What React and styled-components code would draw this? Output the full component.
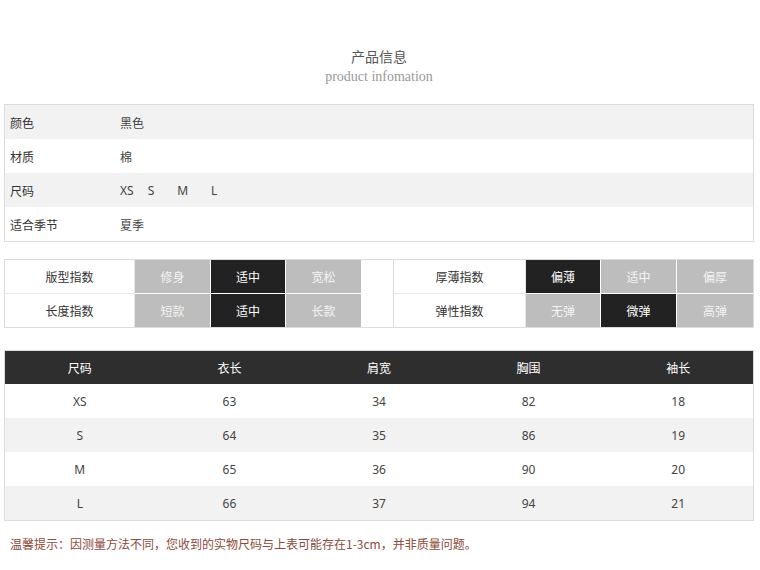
import React from "react";
import styled, { createGlobalStyle } from "styled-components";

const Global = createGlobalStyle`
  html, body { margin: 0; padding: 0; background: #fff; }
  body { font-family: "Noto Sans", "Noto Sans CJK SC", sans-serif; font-size: 12px; color: #333; }
  * { box-sizing: border-box; }
`;

const Page = styled.div`
  width: 760px;
  padding: 46px 6px 0 4px;
`;

const Heading = styled.div`
  text-align: center;
  margin-bottom: 17px;
`;

const Title = styled.div`
  font-family: "Noto Sans CJK SC", sans-serif;
  font-size: 14px;
  line-height: 20px;
  color: #555;
`;

const Subtitle = styled.div`
  margin-top: 1px;
  font-family: "Liberation Serif", serif;
  font-size: 14px;
  line-height: 20px;
  color: #999;
`;

const InfoTable = styled.div`
  border: 1px solid #dcdcdc;
  margin-bottom: 17px;
`;

const InfoRow = styled.div`
  display: flex;
  align-items: center;
  height: 34px;
  background: ${(p) => (p.$alt ? "#f2f2f2" : "#fff")};
`;

const InfoLabel = styled.div`
  width: 115px;
  padding-left: 5px;
  font-family: "Noto Sans CJK SC", sans-serif;
  color: #333;
`;

const InfoValue = styled.div`
  display: flex;
  font-family: "Noto Sans CJK SC", sans-serif;
  color: #444;
`;

const SizeItem = styled.span`
  margin-right: ${(p) => p.$gap}px;
  font-family: "Noto Sans", sans-serif;
`;

const IndexWrap = styled.div`
  display: flex;
  border: 1px solid #dcdcdc;
  margin-bottom: 22px;
`;

const IndexGrid = styled.div`
  display: grid;
  grid-template-columns: ${(p) => p.$cols};
  ${(p) => (p.$right ? "border-left: 1px solid #dcdcdc; margin-left: 32px;" : "")}
`;

const IndexLabel = styled.div`
  height: ${(p) => (p.$first ? 34 : 33)}px;
  display: flex;
  align-items: center;
  justify-content: center;
  font-family: "Noto Sans CJK SC", sans-serif;
  color: #333;
  border-right: 1px solid #e6e6e6;
  ${(p) => (p.$first ? "border-bottom: 1px solid #e6e6e6;" : "")}
`;

const IndexOption = styled.div`
  height: ${(p) => (p.$first ? 34 : 33)}px;
  display: flex;
  align-items: center;
  justify-content: center;
  font-family: "Noto Sans CJK SC", sans-serif;
  background: ${(p) => (p.$on ? "#222" : "#bdbdbd")};
  color: ${(p) => (p.$on ? "#fff" : "#f4f4f4")};
  border-right: ${(p) => (p.$last ? "0" : "1px solid #fff")};
  ${(p) => (p.$first ? "border-bottom: 1px solid #fff;" : "")}
`;

const SizeTable = styled.div`
  border: 1px solid #dcdcdc;
`;

const SizeRow = styled.div`
  display: grid;
  grid-template-columns: repeat(5, 1fr);
  height: ${(p) => (p.$head ? 33 : 34)}px;
  align-items: center;
  background: ${(p) => (p.$head ? "#2e2e2e" : p.$alt ? "#f2f2f2" : "#fff")};
  color: ${(p) => (p.$head ? "#fff" : "#444")};
`;

const SizeCell = styled.div`
  text-align: center;
  font-family: "Noto Sans", "Noto Sans CJK SC", sans-serif;
`;

const Note = styled.div`
  margin-top: 13px;
  padding-left: 6px;
  line-height: 20px;
  font-family: "Noto Sans CJK SC", sans-serif;
  color: #8c4a3a;
`;

const info = [
  ["颜色", "黑色"],
  ["材质", "棉"],
  ["尺码", null],
  ["适合季节", "夏季"],
];

const leftIdx = [
  ["版型指数", ["修身", "适中", "宽松"], 1],
  ["长度指数", ["短款", "适中", "长款"], 1],
];
const rightIdx = [
  ["厚薄指数", ["偏薄", "适中", "偏厚"], 0],
  ["弹性指数", ["无弹", "微弹", "高弹"], 1],
];

const sizes = [
  ["XS", 63, 34, 82, 18],
  ["S", 64, 35, 86, 19],
  ["M", 65, 36, 90, 20],
  ["L", 66, 37, 94, 21],
];

function IndexBlock({ rows, cols, right }) {
  return (
    <IndexGrid $cols={cols} $right={right}>
      {rows.map(([label, opts, on], r) => (
        <React.Fragment key={label}>
          <IndexLabel $first={r === 0}>{label}</IndexLabel>
          {opts.map((o, i) => (
            <IndexOption key={o} $on={i === on} $first={r === 0} $last={i === 2}>
              {o}
            </IndexOption>
          ))}
        </React.Fragment>
      ))}
    </IndexGrid>
  );
}

export default function App() {
  return (
    <>
      <Global />
      <Page>
        <Heading>
          <Title>产品信息</Title>
          <Subtitle>product infomation</Subtitle>
        </Heading>
        <InfoTable>
          {info.map(([k, v], i) => (
            <InfoRow key={k} $alt={i % 2 === 0}>
              <InfoLabel>{k}</InfoLabel>
              <InfoValue>
                {v !== null ? (
                  v
                ) : (
                  <>
                    <SizeItem $gap={14}>XS</SizeItem>
                    <SizeItem $gap={23}>S</SizeItem>
                    <SizeItem $gap={23}>M</SizeItem>
                    <SizeItem $gap={0}>L</SizeItem>
                  </>
                )}
              </InfoValue>
            </InfoRow>
          ))}
        </InfoTable>
        <IndexWrap>
          <IndexBlock rows={leftIdx} cols="130px 76px 75px 75px" />
          <IndexBlock rows={rightIdx} cols="132px 75px 76px 76px" right />
        </IndexWrap>
        <SizeTable>
          <SizeRow $head>
            {["尺码", "衣长", "肩宽", "胸围", "袖长"].map((h) => (
              <SizeCell key={h}>{h}</SizeCell>
            ))}
          </SizeRow>
          {sizes.map((r, i) => (
            <SizeRow key={r[0]} $alt={i % 2 === 1}>
              {r.map((c, j) => (
                <SizeCell key={j}>{c}</SizeCell>
              ))}
            </SizeRow>
          ))}
        </SizeTable>
        <Note>温馨提示：因测量方法不同，您收到的实物尺码与上表可能存在1-3cm，并非质量问题。</Note>
      </Page>
    </>
  );
}
